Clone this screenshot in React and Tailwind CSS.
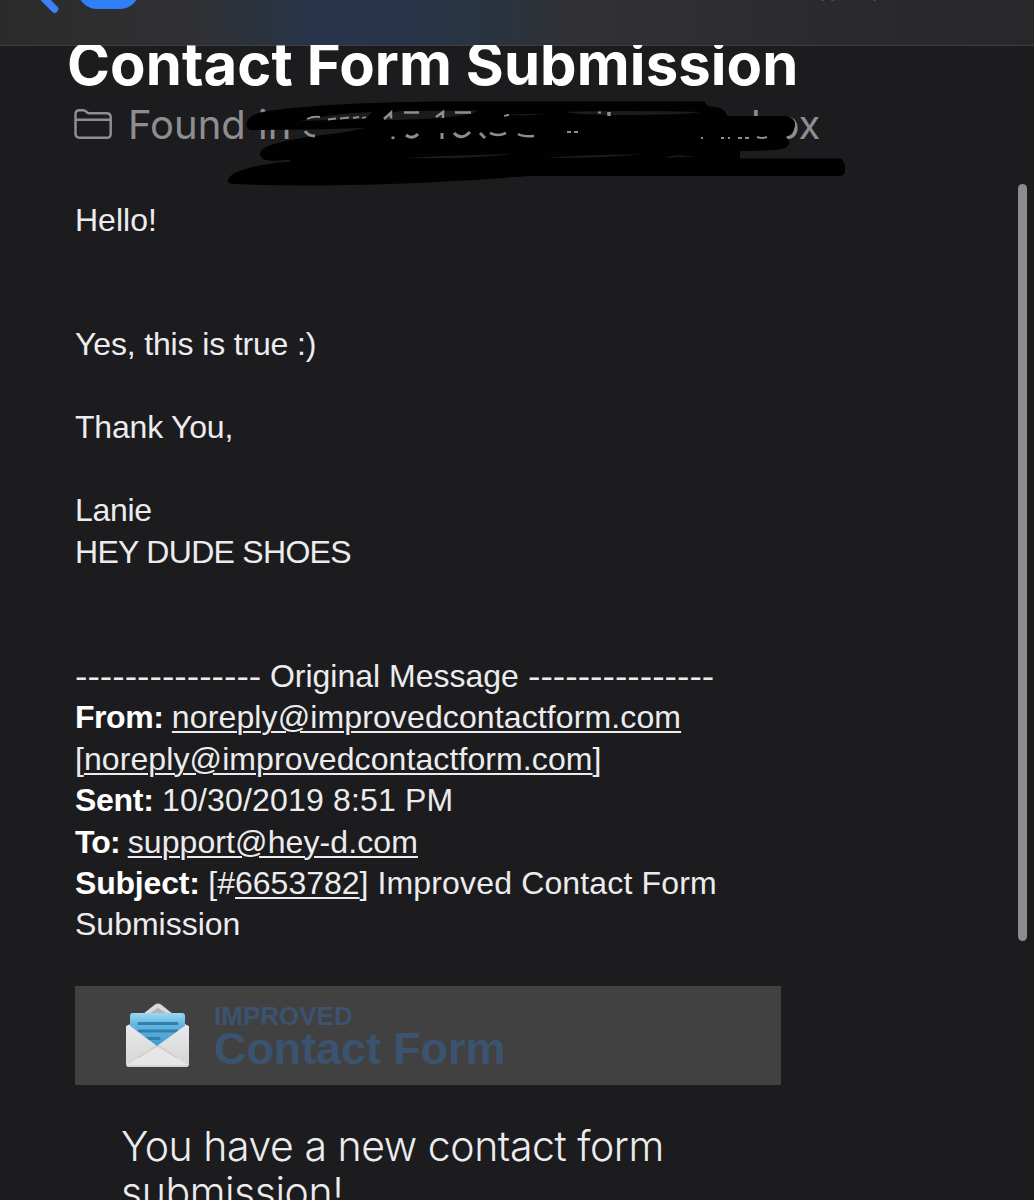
import React from "react";

const LINK = "underline decoration-[2px] underline-offset-[3px] [text-decoration-skip-ink:auto]";

function TopBar() {
  return (
    <header className="h-[45px] overflow-hidden bg-[linear-gradient(90deg,#2b2b2c_0px,#303032_180px,#2c323c_250px,#28354a_310px,#28344a_400px,#2a343f_500px,#313135_570px,#303032_660px,#2a2a2c_850px,#28282a_1034px)]">
      <svg width="1034" height="45" viewBox="0 0 1034 45" fill="none">
        <path d="M30 -16L54.500 9" stroke="#3f80f6" strokeWidth="7.500" strokeLinecap="round" />
        <rect x="77" y="-32" width="63" height="41" rx="20.500" fill="#2f7ff8" />
        <path d="M821 0h3M831 0h3M873 0h3" stroke="#55555a" strokeWidth="1.500" />
      </svg>
    </header>
  );
}

function FolderIcon() {
  return (
    <svg className="-ml-[1px] mt-[7px] shrink-0" width="40" height="34" viewBox="0 0 40 34" fill="none" stroke="#8e8e92" strokeWidth="2.500" strokeLinejoin="round">
      <path d="M1.500 25.500V6.200Q1.500 2.200 5.500 2.200H9Q10.800 2.200 12 3.400L13.100 4.500Q14 5.300 15.500 5.300H32.500Q36.700 5.300 36.700 9.300V25.700Q36.700 29.800 32.500 29.800H5.700Q1.500 29.800 1.500 25.500Z" />
      <path d="M1.500 11.800H36.700" />
    </svg>
  );
}

function Scribble() {
  return (
    <svg className="absolute left-[226px] top-[53px]" width="622" height="92" viewBox="226 98 622 92" fill="#010102">
      <path d="M247 122C249 116 256 113 268 111C320 104 380 102 450 101.500H704L708 106L720 108Q726 111 727 116H786Q796 118 795 126Q794 133 786 137Q793 143 785 148Q780 151 730 151V153L700 158Q675 152 662 156L640 159H460L400 156L300 158Q272 163 263 159Q256 153 266 147Q284 139 340 133L365 128Q310 130 250 130Q245 127 247 122Z" />
      <path d="M228 180Q230 173 246 169Q262 164 285 162Q420 158 520 162Q620 154 700 157L740 158.500H840Q845 160 845 168Q846 176 838 176H530C460 181 370 187 262 185L234 184Q227 184 228 180Z" />
      <path d="M290 150H740V168H290Z" />
      <g fill="#1c1c1e">
        <path d="M300 121Q335 113 372 112L366 119Q330 120 300 121Z" />
        <path d="M384 120Q389 112 400 111L478 110.500Q472 115 440 118Q410 120 384 120Z" />
        <path d="M505 115Q525 113 548 114Q520 116 505 115Z" />
        <path d="M565 112Q620 110 700 112Q690 115 620 115Q580 115 565 112Z" />
        <path d="M405 158Q460 155 512 154Q470 159 405 158Z" />
        <path d="M545 158Q590 154 642 154.500Q600 158 545 158Z" />
        <path d="M666 158Q674 153 695 157Q680 156 666 158Z" />
      </g>
      <g fill="none" stroke="#8e8e92" strokeLinecap="butt">
        <path d="M307 119Q313 116 320 117M328 119.500l8-1M340 118.500l9-1M353 118l6-1M362 118l4-1" strokeWidth="1.800" />
        <path d="M384 119l7-6.500v6M404 112.500h15M436 117l7-5v6M455 112.500h16" strokeWidth="2.500" />
        <path d="M504 116q3-1 5-1M598 112.500h3" strokeWidth="1.800" />
        <path d="M609 112v4" strokeWidth="3.500" />
        <path d="M305 131Q308 136 315 136M393 136.500v2.500M442 133v6M406 135Q412 140 418 134M454 133Q461 141 470 132M480 133l5 5" strokeWidth="3" />
        <path d="M490 133Q498 137 506 133M518 134Q523 137 534 136" strokeWidth="2.600" />
        <path d="M567 132h4M574 132h4M701 138h2M721 138h3M728 138h2M738 138h4M745 138h4M757 137q5 2 10 0" strokeWidth="2" />
      </g>
    </svg>
  );
}

function EnvelopeIcon() {
  return (
    <svg width="66" height="66" viewBox="0 0 66 66" className="mt-[2px] shrink-0">
      <defs>
        <linearGradient id="sheet" x1="0" y1="0" x2="0" y2="1">
          <stop offset="0" stopColor="#9bd8f2" />
          <stop offset=".35" stopColor="#62b5e0" />
          <stop offset="1" stopColor="#3f9ad0" />
        </linearGradient>
        <linearGradient id="paper" x1="0" y1="0" x2="0" y2="1">
          <stop offset="0" stopColor="#e9e9eb" />
          <stop offset="1" stopColor="#d4d4d6" />
        </linearGradient>
      </defs>
      <path d="M1 24L18 11L30 1.500Q33 -0.500 36 1.500L48 11L64 24V60Q64 64 61 64H4Q1 64 1 60Z" fill="#d9d9db" />
      <path d="M25 10L33 5L41 10Z" fill="#b5b1b4" />
      <path d="M5 13Q5 10 8 10H57Q60 10 60 13V26L39 44H27L5 26Z" fill="url(#sheet)" />
      <path d="M14 20.500H52M14 28H52M19 35.500H34" stroke="#347fa9" strokeWidth="3.200" strokeLinecap="round" />
      <path d="M1 23L4 22L32 43L61 22L64 23V60Q64 64 61 64H4Q1 64 1 60Z" fill="url(#paper)" />
      <path d="M2 62L29 44.500Q32.500 42 36 44.500L63 62" fill="#e6e6e8" />
      <path d="M13 55L29 44.500Q32.500 42 36 44.500L52 55" fill="none" stroke="#d3b9b0" strokeWidth="1" />
    </svg>
  );
}

function Line({ children }) {
  return <p className="h-[41.45px] whitespace-pre">{children}</p>;
}

function Dashes() {
  return (
    <span className="inline-block w-[186px]">
      <span className="inline-block origin-left scale-x-[1.165]">---------------</span>
    </span>
  );
}

export default function App() {
  return (
    <div className="relative flex h-[1200px] w-[1034px] flex-col overflow-hidden bg-[#1c1c1e] font-['Liberation_Sans',sans-serif]">
      <TopBar />
      <main className="relative flex-1 overflow-hidden pl-[75px] shadow-[inset_0_1px_0_#3d3d40]">
        <h1 className="-ml-[8px] -mt-[10px] whitespace-nowrap font-['Inter',sans-serif] text-[58px] font-bold leading-[58px] tracking-[0.100px] text-white">
          Contact Form Submission
        </h1>
        <div className="flex h-[50px] whitespace-nowrap pt-[8px] font-['Inter',sans-serif] text-[40px] leading-[48px] text-[#8e8e92]">
          <FolderIcon />
          <span className="ml-[14px] w-[130px]">Found</span>
          <span className="w-[493px]">in</span>
          <span>box</span>
        </div>
        <Scribble />

        <article className="mt-[57px] text-[32px] leading-[41.45px] text-[#ececee]">
          <Line>Hello!</Line>
          <Line /><Line />
          <Line><span className="tracking-[-0.150px]">Yes, this is true :)</span></Line>
          <Line />
          <Line><span className="tracking-[-0.200px]">Thank You,</span></Line>
          <Line />
          <Line><span className="tracking-[-0.300px]">Lanie</span></Line>
          <Line><span className="tracking-[-0.700px]">HEY DUDE SHOES</span></Line>
          <Line /><Line />
          <Line>
            <Dashes /> Original Message <Dashes />
          </Line>
          <Line>
            <b className="tracking-[-0.450px] text-white">From: </b>
            <a className={LINK + " tracking-[0.120px]"}>noreply@improvedcontactform.com</a>
          </Line>
          <Line>
            [<a className={LINK + " tracking-[0.100px]"}>noreply@improvedcontactform.com</a>]
          </Line>
          <Line><b className="tracking-[-0.300px] text-white">Sent: </b><span className="tracking-[0.170px]">10/30/2019 8:51 PM</span></Line>
          <Line>
            <b className="tracking-[-0.900px] text-white">To: </b>
            <a className={LINK + " tracking-[0.100px]"}>support@hey-d.com</a>
          </Line>
          <Line>
            <b className="tracking-[-0.200px] text-white">Subject: </b>
            [#<a className={LINK}>6653782</a>]<span className="tracking-[0.150px]"> Improved Contact Form</span>
          </Line>
          <Line>Submission</Line>
        </article>

        <section className="mt-[40px] flex h-[99px] w-[706px] items-center bg-[#414142] pl-[50px] font-bold text-[#3b536f]">
          <EnvelopeIcon />
          <div className="ml-[23px] pt-[2px]">
            <div className="h-[26px] text-[26px] leading-[26px]">IMPROVED</div>
            <div className="h-[40px] text-[45px] leading-[40px] tracking-[-0.100px]">Contact Form</div>
          </div>
        </section>

        <p className="ml-[46px] mt-[38px] w-[620px] whitespace-pre-line font-['Inter',sans-serif] text-[41px] font-light leading-[46px] tracking-[-0.450px] text-[#ececee]">
          {"You have a new contact form\nsubmission!"}
        </p>
        <div className="absolute left-[1018px] top-[139px] h-[757px] w-[9px] rounded-full bg-[#8c8c8e]" />
      </main>
    </div>
  );
}
